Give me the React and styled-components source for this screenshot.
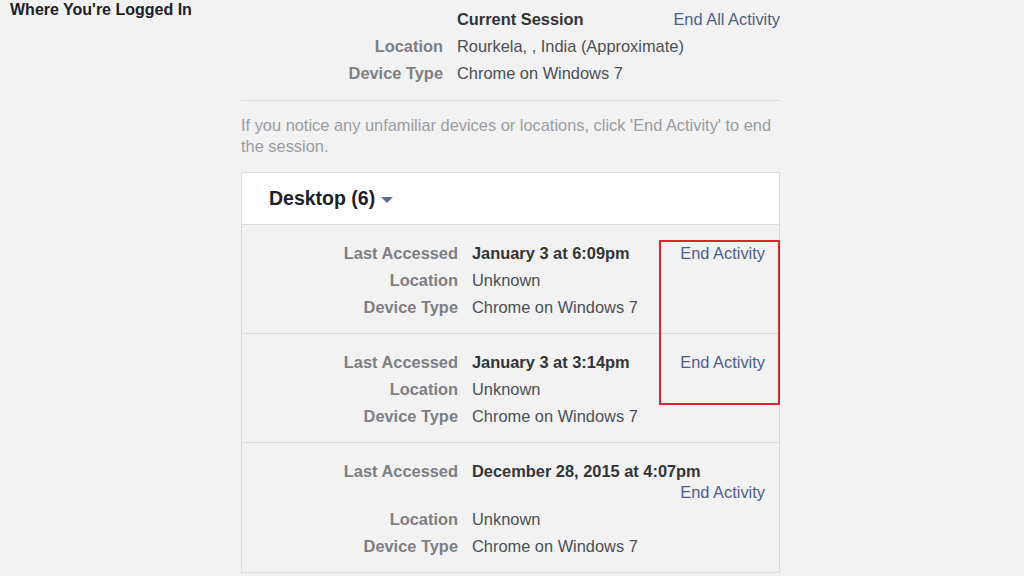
import React from 'react';
import styled, { createGlobalStyle } from 'styled-components';

const GlobalStyle = createGlobalStyle`
  html, body {
    margin: 0;
    padding: 0;
    background: #f2f2f2;
    font-family: "Liberation Sans", Arial, sans-serif;
    font-size: 16.4px;
  }
`;

const sessions = [
    { accessed: 'January 3 at 6:09pm', location: 'Unknown', device: 'Chrome on Windows 7' },
    { accessed: 'January 3 at 3:14pm', location: 'Unknown', device: 'Chrome on Windows 7' },
    { accessed: 'December 28, 2015 at 4:07pm', location: 'Unknown', device: 'Chrome on Windows 7' },
];

// One line of label / value / optional action
const Field = ({ labelWidth, label, value, strong, action }) => (
    <FieldRow $labelWidth={labelWidth}>
        <Label>{label}</Label>
        <ValueWrap>
            <Value $strong={strong}>{value}</Value>
            {action && <Action>{action}</Action>}
        </ValueWrap>
    </FieldRow>
);

const App = () => {
    return (
        <Page>
            <GlobalStyle />
            <Side>
                <Title>Where You're Logged In</Title>
            </Side>
            <Content>
                <CurrentSession>
                    <Field labelWidth={202} label="" value="Current Session" strong action="End All Activity" />
                    <Field labelWidth={202} label="Location" value="Rourkela, , India (Approximate)" />
                    <Field labelWidth={202} label="Device Type" value="Chrome on Windows 7" />
                </CurrentSession>
                <Notice>
                    If you notice any unfamiliar devices or locations, click 'End Activity' to end the session.
                </Notice>
                <Panel>
                    <PanelHeader>
                        Desktop (6)
                        <Caret />
                    </PanelHeader>
                    {sessions.map((s) => (
                        <SessionRow key={s.accessed}>
                            <Field labelWidth={216} label="Last Accessed" value={s.accessed} strong action="End Activity" />
                            <Field labelWidth={216} label="Location" value={s.location} />
                            <Field labelWidth={216} label="Device Type" value={s.device} />
                        </SessionRow>
                    ))}
                    <Highlight />
                </Panel>
            </Content>
        </Page>
    );
};

const Page = styled.div`
    display: flex;
    align-items: flex-start;
    min-height: 576px;
    overflow: hidden;
`;

const Side = styled.div`
    width: 231px;
    padding: 1px 0 0 10px;
    flex-shrink: 0;
`;

const Title = styled.h1`
    margin: 0;
    font-size: 16px;
    line-height: 18px;
    font-weight: bold;
    color: #1d2129;
`;

const Content = styled.div`
    width: 539px;
    flex-shrink: 0;
`;

const CurrentSession = styled.div`
    padding: 6px 0 13px;
    border-bottom: 1px solid #dcdcdc;
`;

const FieldRow = styled.div`
    display: grid;
    grid-template-columns: ${(p) => p.$labelWidth}px 1fr;
    column-gap: 14px;
    padding: 3px 0;
    line-height: 21px;
`;

const Label = styled.div`
    text-align: right;
    font-weight: bold;
    color: #7d7f84;
`;

const ValueWrap = styled.div`
    display: flex;
    flex-wrap: wrap;
    justify-content: space-between;
`;

const Value = styled.span`
    color: ${(p) => (p.$strong ? '#333438' : '#4b4f56')};
    font-weight: ${(p) => (p.$strong ? 'bold' : 'normal')};
`;

const Action = styled.a`
    margin-left: auto;
    color: #4d5d8c;
    cursor: pointer;
`;

const Notice = styled.p`
    margin: 14px 0 15px;
    line-height: 21px;
    color: #9a9ca1;
`;

const Panel = styled.div`
    position: relative;
    border: 1px solid #dcdcdc;
    border-bottom: none;
`;

const PanelHeader = styled.div`
    display: flex;
    align-items: center;
    height: 51px;
    padding-left: 27px;
    background: #ffffff;
    font-size: 19.5px;
    font-weight: bold;
    color: #1d2129;
`;

const Caret = styled.span`
    margin-left: 6px;
    margin-top: 3px;
    width: 0;
    height: 0;
    border-left: 6px solid transparent;
    border-right: 6px solid transparent;
    border-top: 6px solid #5b6e99;
`;

const SessionRow = styled.div`
    padding: 15px 14px 12px 0;
    border-top: 1px solid #dcdcdc;
    border-bottom: 1px solid #dcdcdc;
    margin-bottom: -1px;
`;

const Highlight = styled.div`
    position: absolute;
    left: 417px;
    top: 67px;
    width: 117px;
    height: 161px;
    border: 2px solid #e3232c;
    pointer-events: none;
`;

export default App;
